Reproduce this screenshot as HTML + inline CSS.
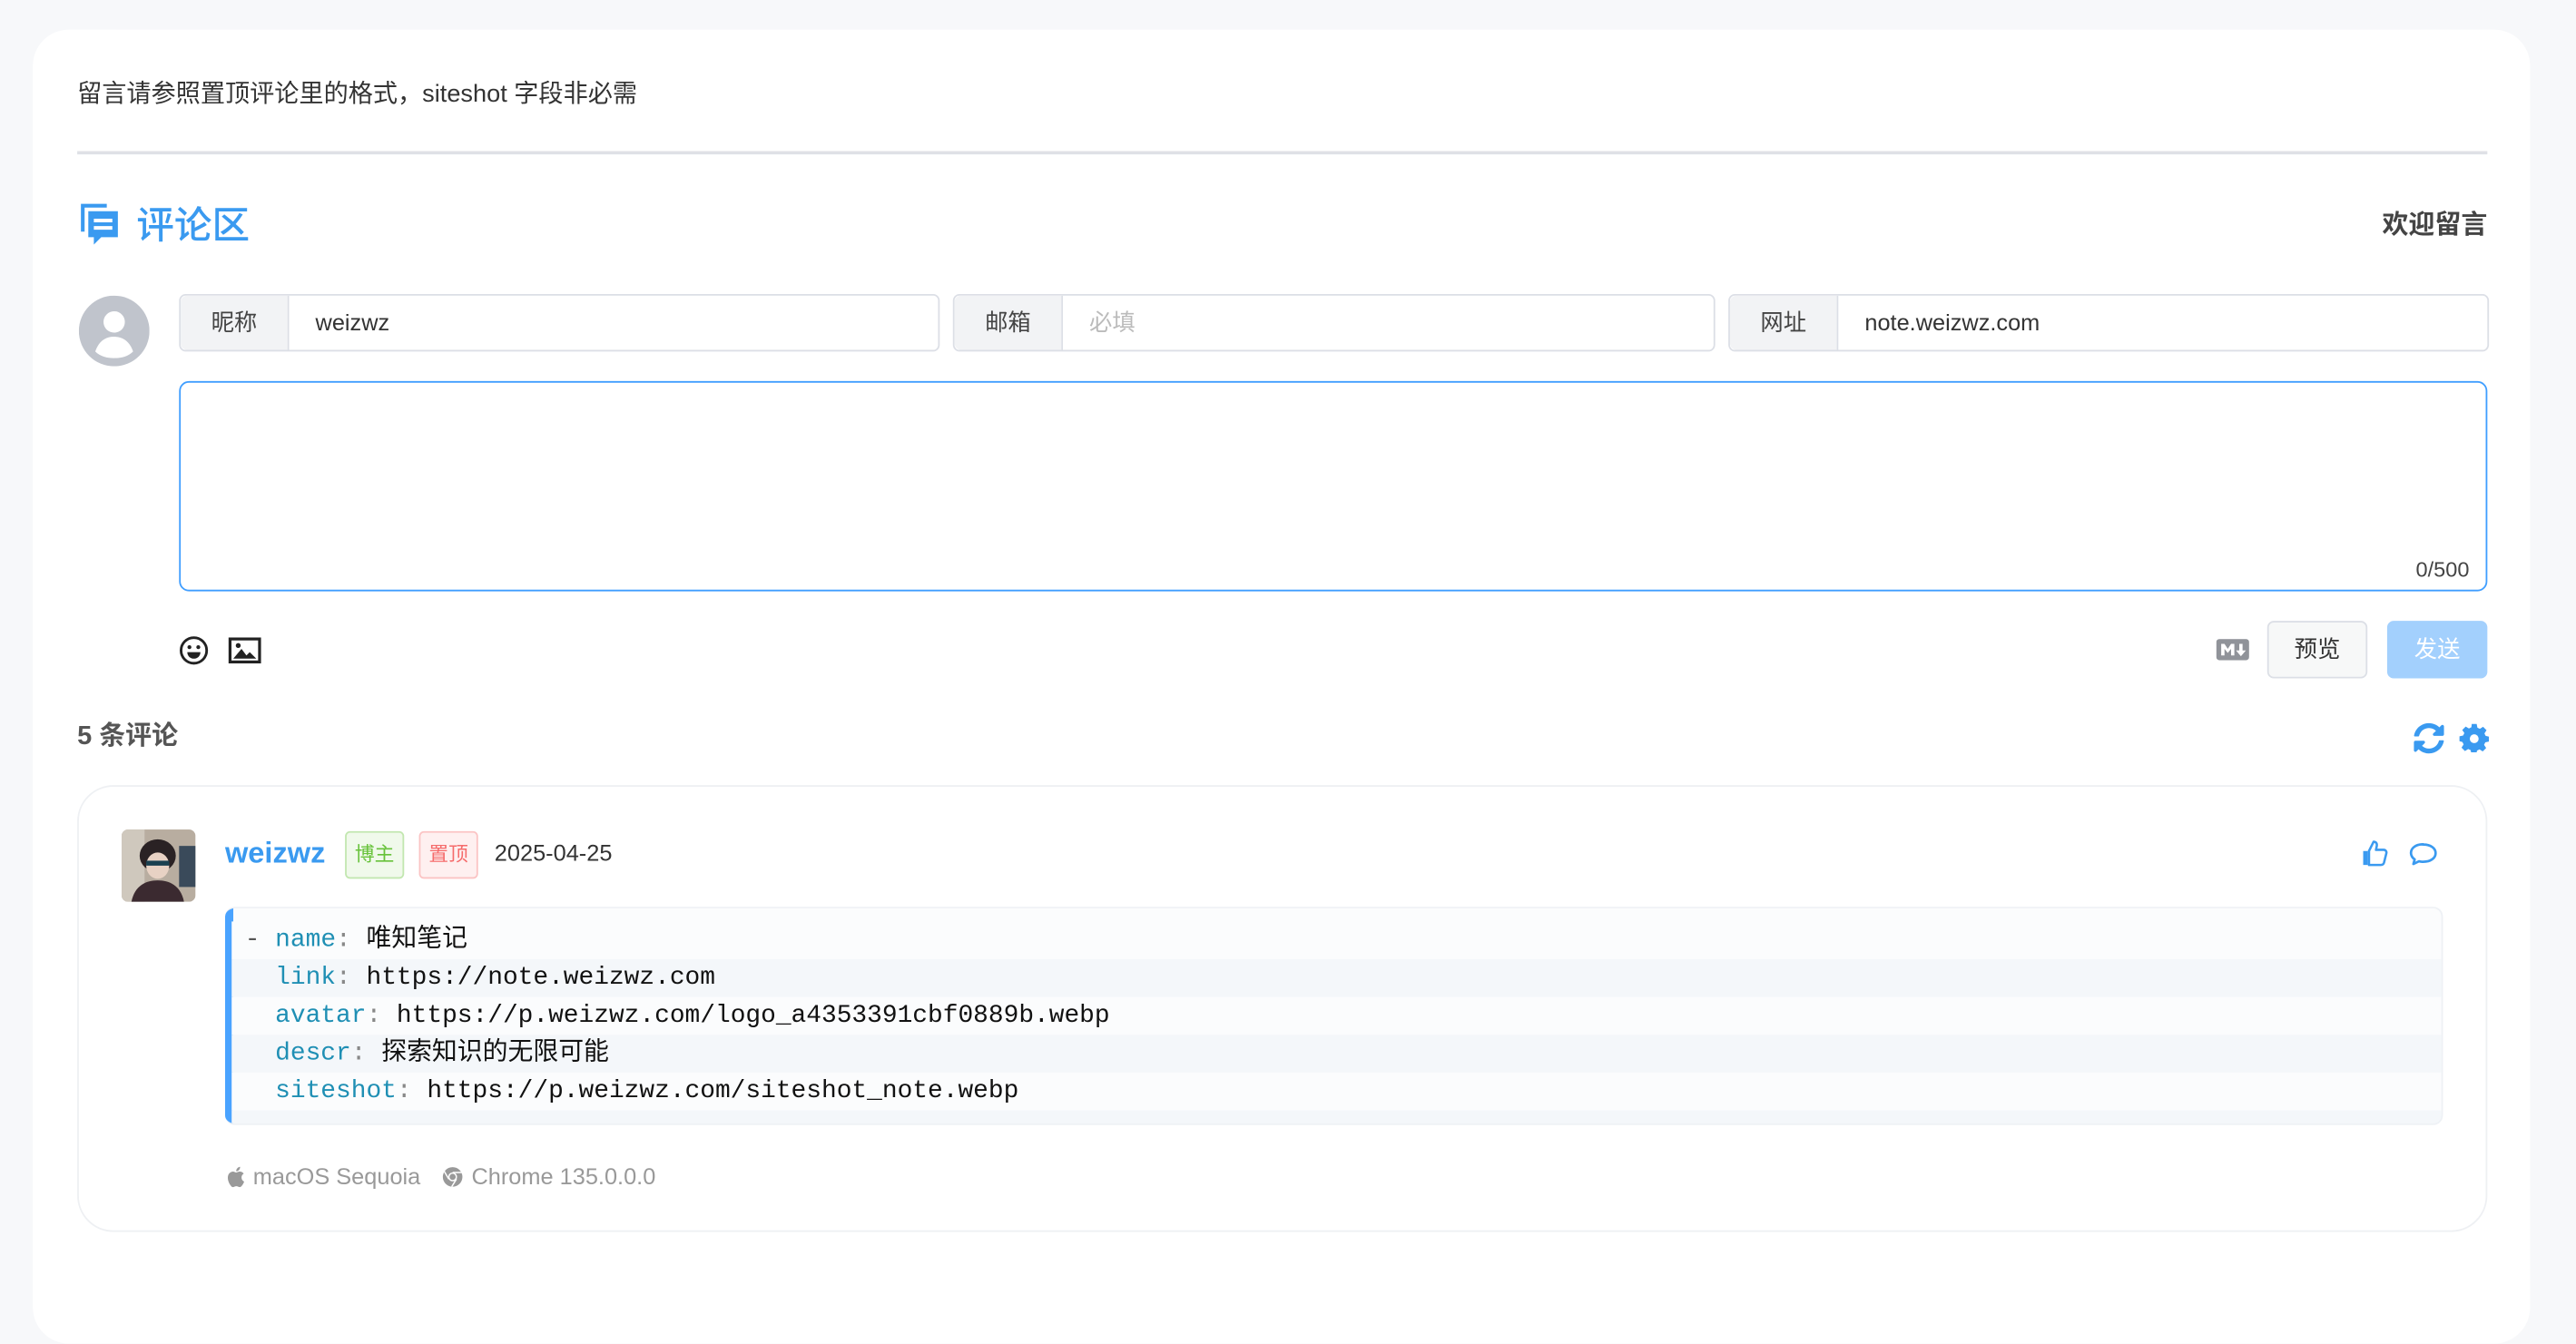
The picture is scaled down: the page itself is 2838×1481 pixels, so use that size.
<!DOCTYPE html>
<html><head><meta charset="utf-8"><style>
html,body{margin:0;padding:0;background:#f7f8fa;width:2838px;height:1398px;overflow:hidden}
#s{position:absolute;left:0;top:0;width:1568px;height:773px;transform:scale(1.81);transform-origin:0 0;font-family:"Liberation Sans","Noto Sans CJK SC",sans-serif;color:#333}
.a{position:absolute}
.card{left:20px;top:18px;width:1520px;height:800px;background:#fff;border-radius:22px}
.grp{top:179px;height:33px;border:1px solid #dcdfe6;border-radius:4px;background:#fff;font-size:14px}
.grp .l{position:absolute;left:0;top:0;width:65px;height:33px;background:#f2f3f5;border-right:1px solid #dcdfe6;line-height:33px;text-align:center;color:#444;border-radius:4px 0 0 4px}
.grp .v{position:absolute;left:83px;top:0;line-height:33px;color:#333}
.code{font-family:"Liberation Mono","Noto Sans CJK SC",monospace;font-size:15.4px}
.ln{position:absolute;left:4px;right:0;height:23px;line-height:23px;padding-left:9px;white-space:pre;color:#111}
.k{color:#1f8fb4}
.tag{top:506px;height:27px;line-height:27px;width:34px;text-align:center;font-size:12px;border-radius:3px}
</style></head><body><div id="s">
<div class="a card"></div>
<div class="a" style="left:47px;top:46px;font-size:15px;color:#333">留言请参照置顶评论里的格式，siteshot 字段非必需</div>
<div class="a" style="left:47px;top:92px;width:1467px;height:2px;background:#dfe1e6"></div>
<svg class="a" style="left:47px;top:123px" width="27" height="27" viewBox="0 0 24 24"><path d="M2 1h14v2H4v13H2z" fill="#3a9af0"/><path d="M6 5h16v14h-9l-4 4v-4H6z" fill="#3a9af0"/><path d="M9 9h10v2H9zM9 13h10v2H9z" fill="#fff"/></svg>
<div class="a" style="left:83px;top:118px;font-size:23px;color:#3a9af0;font-weight:500">评论区</div>
<div class="a" style="right:54px;top:123px;font-size:16px;color:#444;font-weight:600">欢迎留言</div>
<svg class="a" style="left:48px;top:180px" width="43" height="43" viewBox="0 0 43 43"><circle cx="21.5" cy="21.5" r="21.5" fill="#c0c4cc"/><circle cx="21.5" cy="16" r="6.5" fill="#fff"/><path d="M10 34c2-6 6-9 11.5-9s9.5 3 11.5 9c-3 3-7 4-11.5 4s-8.5-1-11.5-4z" fill="#fff"/></svg>
<div class="a grp" style="left:109px;width:461px"><div class="l">昵称</div><div class="v" style="left:82px">weizwz</div></div>
<div class="a grp" style="left:580px;width:462px"><div class="l">邮箱</div><div class="v" style="left:82px;color:#bbb">必填</div></div>
<div class="a grp" style="left:1052px;width:461px"><div class="l">网址</div><div class="v" style="left:82px">note.weizwz.com</div></div>
<div class="a" style="left:109px;top:232px;width:1403px;height:126px;border:1px solid #409eff;border-radius:6px"></div>
<div class="a" style="right:65px;top:339px;font-size:13px;color:#444">0/500</div>
<svg class="a" style="left:109px;top:387px" width="18" height="18" viewBox="0 0 18 18"><circle cx="9" cy="9" r="7.8" fill="none" stroke="#222" stroke-width="1.6"/><circle cx="6.3" cy="7" r="1.2" fill="#222"/><circle cx="11.7" cy="7" r="1.2" fill="#222"/><path d="M5 10h8c0 2.5-2 4-4 4s-4-1.5-4-4z" fill="#222"/></svg>
<svg class="a" style="left:139px;top:388px" width="20" height="16" viewBox="0 0 20 16"><rect x="1" y="1" width="18" height="14" fill="none" stroke="#222" stroke-width="1.8"/><path d="M3 13l5-6 3 4 2-2 4 4z" fill="#222"/><circle cx="6" cy="5" r="1.5" fill="#222"/></svg>
<svg class="a" style="left:1349px;top:389px" width="20" height="13" viewBox="0 0 20 13"><rect width="20" height="13" rx="2" fill="#909399"/><path d="M3 10V3h2l2 3 2-3h2v7H9V6L7 8.5 5 6v4z" fill="#fff"/><path d="M14 3h2v4h2l-3 3.5L12 7h2z" fill="#fff"/></svg>
<div class="a" style="left:1380px;top:378px;width:59px;height:33px;border:1px solid #dcdfe6;border-radius:4px;background:#f7f8f8;text-align:center;line-height:33px;font-size:14px;color:#333">预览</div>
<div class="a" style="left:1453px;top:378px;width:61px;height:35px;border-radius:4px;background:#a3d0fd;text-align:center;line-height:35px;font-size:14px;color:#fff">发送</div>
<div class="a" style="left:47px;top:434px;font-size:16px;font-weight:bold;color:#555">5 条评论</div>
<svg class="a" style="left:1469px;top:440px" width="19" height="19" viewBox="0 0 512 512"><path fill="#3a9af0" d="M370 133c-31-29-72-45-115-45-77 0-144 53-162 127-1 5-6 9-12 9H22c-8 0-13-7-12-14C33 90 134 8 256 8c65 0 125 26 169 68l35-35c15-15 41-4 41 17v134c0 13-11 24-24 24H343c-21 0-32-26-17-41l44-42zM32 296h134c21 0 32 26 17 41l-42 42c31 29 72 45 115 45 77 0 144-53 162-127 1-5 6-9 12-9h57c8 0 13 7 12 14-23 120-124 202-246 202-65 0-125-26-169-68l-35 35c-15 15-41 4-41-17V320c0-13 11-24 24-24z"/></svg>
<svg class="a" style="left:1497px;top:440px" width="18" height="18" viewBox="0 0 24 24"><path fill="#3a9af0" d="M10 1h4l.6 3 2 1 2.6-1.7 2.8 2.8L20.3 8.7l1 2 2.7.6v4l-3 .6-1 2 1.7 2.6-2.8 2.8-2.6-1.7-2 1-.6 2.7h-4l-.6-3-2-1-2.6 1.7-2.8-2.8 1.7-2.6-1-2L0 15v-4l3-.6 1-2L2.3 5.9l2.8-2.8L7.7 4.7l2-1z"/><circle cx="12" cy="13" r="3.6" fill="#fff"/></svg>
<div class="a" style="left:47px;top:478px;width:1465px;height:270px;border:1px solid #eef0f3;border-radius:22px"></div>
<svg class="a" style="left:74px;top:505px;border-radius:4px" width="45" height="44" viewBox="0 0 45 44"><rect width="45" height="44" fill="#b8ada0"/><rect x="0" y="0" width="14" height="44" fill="#cfc8bd"/><rect x="35" y="10" width="10" height="25" fill="#3a4a5a"/><ellipse cx="22" cy="16" rx="11" ry="10" fill="#2a2224"/><ellipse cx="22" cy="22" rx="7" ry="8" fill="#e8d2c4"/><rect x="15" y="19" width="14" height="3" fill="#1a4050"/><path d="M6 44c2-10 9-13 16-13s14 3 16 13z" fill="#3b2a30"/></svg>
<div class="a" style="left:137px;top:509px;font-size:18px;font-weight:bold;color:#3a9af0">weizwz</div>
<div class="a tag" style="left:210px;background:#f0f9eb;border:1px solid #c2e7b0;color:#67c23a">博主</div>
<div class="a tag" style="left:255px;background:#fef0f0;border:1px solid #fbc4c4;color:#f56c6c">置顶</div>
<div class="a" style="left:301px;top:511px;font-size:14px;color:#333">2025-04-25</div>
<svg class="a" style="left:1437px;top:511px" width="17" height="17" viewBox="0 0 24 24"><path d="M2 10h4v12H2z" fill="#3a9af0"/><path d="M7 10l4-8c2 0 3 1.5 2.7 3.5L13 9h6.5c1.8 0 2.8 1.5 2.4 3l-2 8c-.4 1.4-1.5 2-2.8 2H7z" fill="none" stroke="#3a9af0" stroke-width="2" stroke-linejoin="round"/></svg>
<svg class="a" style="left:1466px;top:512px" width="18" height="16" viewBox="0 0 24 20"><path d="M12 2C6 2 2 5 2 9c0 2.2 1.2 4 3 5.3L4 18l4.5-2.2c1.1.3 2.3.4 3.5.4 6 0 10-3 10-7s-4-7-10-7z" fill="none" stroke="#3a9af0" stroke-width="2" stroke-linejoin="round"/></svg>
<div class="a code" style="left:137px;top:552px;width:1349px;height:131px;border:1px solid #eef1f5;border-left:none;border-radius:6px;background:#fbfcfd;overflow:hidden">
<div style="position:absolute;left:0;top:0;width:5px;height:133px;background:#4aa3ff;border-radius:6px 0 0 6px"></div>
<div class="ln" style="top:8px;background:#fbfcfd;padding-left:8px"><span style="color:#555">-</span> <span class="k">name</span><span style="color:#888">:</span> 唯知笔记</div>
<div class="ln" style="top:31px;background:#f4f7fa;padding-left:8px">  <span class="k">link</span><span style="color:#888">:</span> https://note.weizwz.com</div>
<div class="ln" style="top:54px;background:#fbfcfd;padding-left:8px">  <span class="k">avatar</span><span style="color:#888">:</span> https://p.weizwz.com/logo_a4353391cbf0889b.webp</div>
<div class="ln" style="top:77px;background:#f4f7fa;padding-left:8px">  <span class="k">descr</span><span style="color:#888">:</span> 探索知识的无限可能</div>
<div class="ln" style="top:100px;background:#fbfcfd;padding-left:8px">  <span class="k">siteshot</span><span style="color:#888">:</span> https://p.weizwz.com/siteshot_note.webp</div>
<div class="ln" style="top:123px;background:#f4f7fa"> </div>
</div>
<svg class="a" style="left:138px;top:710px" width="11" height="13" viewBox="0 0 24 28"><path fill="#999" d="M19.7 14.8c0-3.4 2.8-5 2.9-5.1-1.6-2.3-4-2.6-4.9-2.7-2.1-.2-4.1 1.2-5.1 1.2-1.1 0-2.7-1.200-4.4-1.200C5.9 7.1 3.8 8.4 2.6 10.4c-2.4 4.2-.6 10.3 1.7 13.7 1.1 1.7 2.5 3.5 4.2 3.4 1.7-.1 2.3-1.1 4.3-1.1s2.6 1.1 4.4 1.1c1.8 0 3-1.7 4.1-3.4 1.3-1.9 1.8-3.8 1.8-3.9 0 0-3.400-1.3-3.4-5.4zM16.4 4.7c.9-1.1 1.5-2.6 1.4-4.1-1.3.1-2.9.9-3.8 2-.8.9-1.6 2.5-1.4 3.9 1.4.1 2.9-.7 3.8-1.8z"/></svg>
<div class="a" style="left:154px;top:708px;font-size:14px;color:#999">macOS Sequoia</div>
<svg class="a" style="left:269px;top:710px" width="13" height="13" viewBox="0 0 24 24"><circle cx="12" cy="12" r="11" fill="#999"/><circle cx="12" cy="12" r="5" fill="#fff"/><circle cx="12" cy="12" r="3.5" fill="#999"/><path d="M12 7h10M7.7 14.5L2.5 5.5M16.3 14.5L11 23" stroke="#fff" stroke-width="1.5"/></svg>
<div class="a" style="left:287px;top:708px;font-size:14px;color:#999">Chrome 135.0.0.0</div>
</div></body></html>
